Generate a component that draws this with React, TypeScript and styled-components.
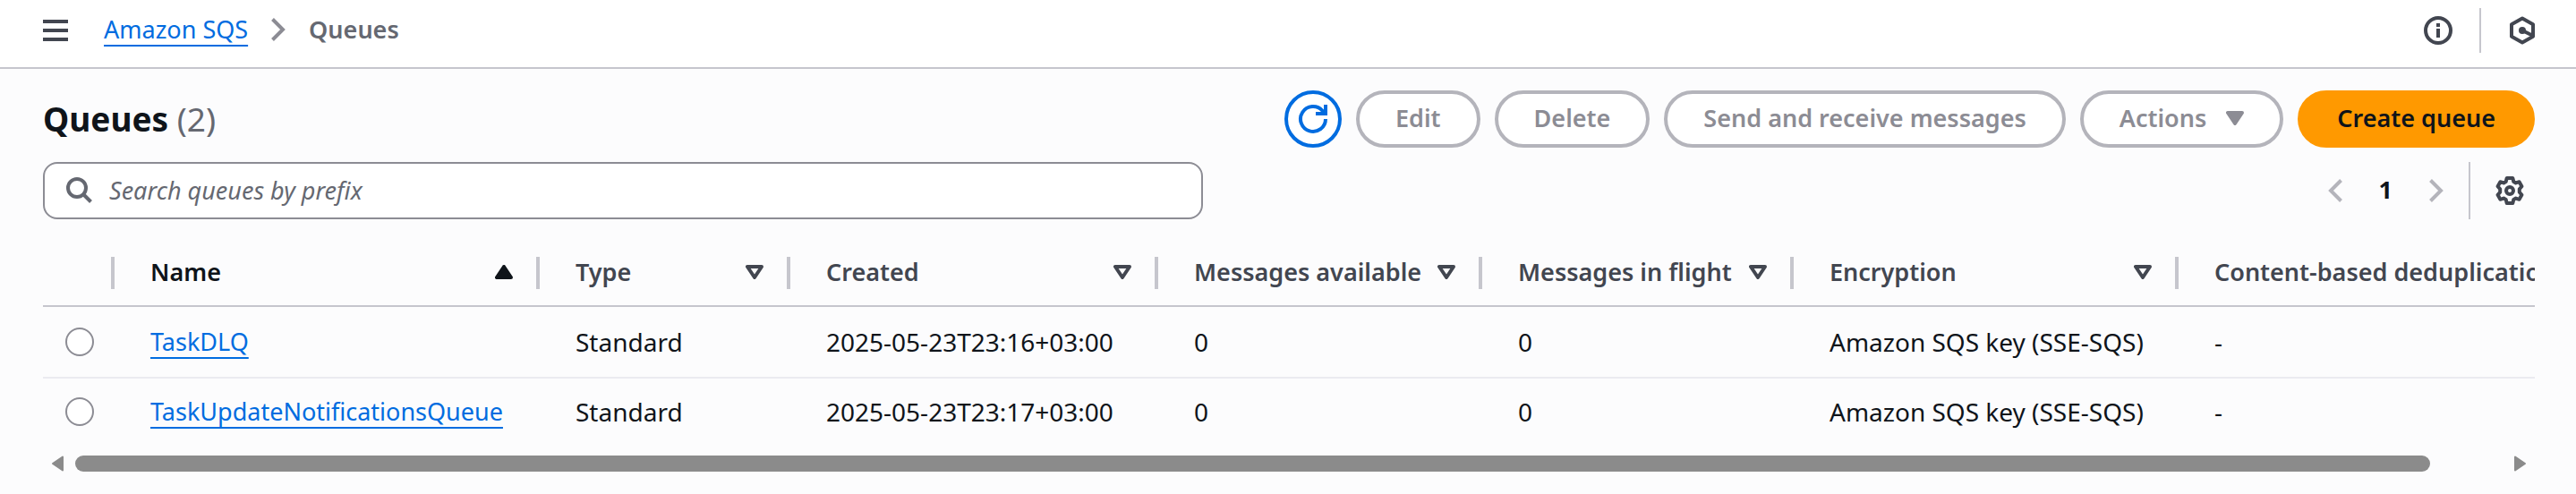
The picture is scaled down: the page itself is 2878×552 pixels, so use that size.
import React from 'react';
import styled, { createGlobalStyle } from 'styled-components';

const color = {
  text: '#0f141a',
  heading: '#424650',
  muted: '#656871',
  link: '#006ce0',
  line: '#c6c6cd',
  rowLine: '#ebebf0',
  disabledBorder: '#b4b4bb',
  disabledText: '#8c8c94',
  accent: '#ff9900',
  page: '#fcfcfd',
  surface: '#ffffff',
};

const GlobalStyle = createGlobalStyle`
  *, *::before, *::after { box-sizing: border-box; }
  body {
    margin: 0;
    background: ${color.page};
    color: ${color.text};
    font-family: "Noto Sans", "Open Sans", sans-serif;
    font-size: 27px;
    line-height: 36px;
  }
  button, input { font: inherit; color: inherit; }
`;

const TopBar = styled.header`
  display: flex;
  align-items: center;
  justify-content: space-between;
  height: 77px;
  padding: 0 44px 7px 48px;
  background: ${color.surface};
  border-bottom: 2px solid ${color.line};
`;

const TopBarGroup = styled.div<{ $gap: number }>`
  display: flex;
  align-items: center;
  gap: ${(p) => p.$gap}px;
`;

const IconButton = styled.button<{ $tone?: string }>`
  display: flex;
  align-items: center;
  justify-content: center;
  padding: 0;
  border: 0;
  background: none;
  color: ${(p) => p.$tone ?? color.heading};
  cursor: pointer;
`;

const Crumbs = styled.ol`
  display: flex;
  align-items: center;
  gap: 26px;
  margin: 0;
  padding: 0 0 2px;
  list-style: none;

  svg { display: block; color: ${color.disabledText}; }
`;

const CurrentCrumb = styled.span`
  color: ${color.muted};
  font-weight: 600;
`;

const Link = styled.a`
  color: ${color.link};
  text-decoration: underline;
  text-decoration-thickness: 2px;
  text-decoration-skip-ink: none;
  text-underline-offset: 7px;
`;

const Divider = styled.span<{ $height: number }>`
  width: 2px;
  height: ${(p) => p.$height}px;
  background: ${color.line};
`;

const Main = styled.main`
  padding: 24px 46px 24px 48px;
`;

const TitleRow = styled.div`
  display: flex;
  align-items: center;
  justify-content: space-between;
  margin-bottom: 16px;
`;

const Title = styled.h1`
  margin: 0;
  font-size: 37px;
  line-height: 48px;
  font-weight: 700;
`;

const Count = styled.span`
  color: ${color.muted};
  font-weight: 400;
`;

const ButtonGroup = styled.div`
  display: flex;
  gap: 16px;
`;

const Button = styled.button<{ $primary?: boolean }>`
  display: flex;
  align-items: center;
  gap: 22px;
  height: 64px;
  padding: 0 40px 2px;
  border: 4px solid ${(p) => (p.$primary ? color.accent : color.disabledBorder)};
  border-radius: 32px;
  background: ${(p) => (p.$primary ? color.accent : color.surface)};
  color: ${(p) => (p.$primary ? color.text : color.disabledText)};
  font-weight: 600;
  white-space: nowrap;
`;

const RefreshButton = styled(IconButton)`
  width: 64px;
  height: 64px;
  border: 4px solid ${color.link};
  border-radius: 50%;
  background: ${color.surface};
  color: ${color.link};
`;

const ToolsRow = styled.div`
  display: flex;
  align-items: center;
  justify-content: space-between;
`;

const SearchBox = styled.label`
  display: flex;
  align-items: center;
  gap: 18px;
  flex: 0 1 1296px;
  height: 64px;
  padding: 0 24px;
  border: 2px solid ${color.disabledText};
  border-radius: 16px;
  background: ${color.surface};
  color: ${color.muted};
`;

const SearchInput = styled.input`
  flex: 1;
  min-width: 0;
  height: 56px;
  padding: 0 0 2px;
  border: 0;
  outline: 0;
  background: none;

  &::placeholder {
    color: ${color.muted};
    font-style: italic;
    opacity: 1;
  }
`;

const Pager = styled.nav`
  display: flex;
  align-items: center;
  padding-right: 12px;
`;

const PagerItems = styled.div`
  display: flex;
  align-items: center;
  gap: 41px;
  margin-right: 28px;
`;

const PageNumber = styled.button`
  padding: 0 0 2px;
  border: 0;
  background: none;
  font-weight: 700;
`;

const SettingsSlot = styled.div`
  display: flex;
  align-items: center;
  gap: 28px;
`;

const TableScroller = styled.div`
  margin-top: 24px;
  overflow-x: auto;
  scrollbar-width: none;
`;

const Table = styled.table`
  width: 2870px;
  border-collapse: separate;
  border-spacing: 0;
  table-layout: fixed;
`;

const Column = styled.col<{ $width?: number }>`
  width: ${(p) => (p.$width ? `${p.$width}px` : 'auto')};
`;

const HeaderCell = styled.th<{ $sorted?: boolean }>`
  padding: 18px 0;
  border-bottom: 2px solid ${color.line};
  color: ${(p) => (p.$sorted ? color.text : color.heading)};
  font-weight: 600;
  text-align: left;
`;

const HeaderContent = styled.div`
  display: flex;
  align-items: center;
  justify-content: space-between;
  height: 36px;
  padding: 0 26px 2px 40px;
  border-right: 4px solid ${color.line};
  white-space: nowrap;
`;

const Cell = styled.td<{ $link?: boolean }>`
  padding: 0 0 0 40px;
  font-size: ${(p) => (p.$link ? 27 : 28)}px;
  white-space: nowrap;
`;

const SelectCell = styled(Cell)`
  padding-left: 25px;
`;

const BodyRow = styled.tr`
  height: 74px;

  &:not(:last-child) { height: 80px; }
  &:not(:last-child) > td { border-bottom: 2px solid ${color.rowLine}; }
`;

const Radio = styled.input`
  display: block;
  appearance: none;
  width: 32px;
  height: 32px;
  margin: 0;
  border: 2px solid ${color.disabledText};
  border-radius: 50%;
  background: ${color.surface};

  &:checked { border: 10px solid ${color.link}; }
`;

const ScrollBar = styled.div`
  display: flex;
  align-items: center;
  gap: 13px;
  margin-top: 12px;
  padding: 0 9px;
  color: #8b8b8b;
`;

const ScrollTrack = styled.div`
  flex: 1;
`;

const ScrollThumb = styled.div`
  width: 97%;
  height: 18px;
  border-radius: 9px;
  background: currentColor;
`;

type IconProps = { w: number; h: number; children: React.ReactNode };
const Icon = ({ w, h, children }: IconProps) => (
  <svg
    width={w}
    height={h}
    viewBox={`0 0 ${w} ${h}`}
    fill="none"
    stroke="currentColor"
    strokeWidth="4"
    aria-hidden="true"
  >
    {children}
  </svg>
);

const MenuIcon = () => (
  <Icon w={28} h={24}>
    <path d="M0 2H28M0 12H28M0 22H28" />
  </Icon>
);
const ChevronRight = () => (
  <Icon w={16} h={26}>
    <path d="M1.500 1.500 L13 13 L1.500 24.500" />
  </Icon>
);
const ChevronLeft = () => (
  <Icon w={16} h={26}>
    <path d="M14.500 1.500 L3 13 L14.500 24.500" />
  </Icon>
);
const InfoIcon = () => (
  <Icon w={32} h={32}>
    <circle cx="16" cy="16" r="14" />
    <path d="M16 8V12M16 14V24" />
  </Icon>
);
const HexagonIcon = () => (
  <Icon w={32} h={32}>
    <path d="M16 2.500 L28 9.200 V22.800 L16 29.500 L4 22.800 V9.200 Z" strokeLinejoin="round" />
    <circle cx="16" cy="16" r="4" fill="currentColor" stroke="none" />
    <path d="M16 16 L28 22" />
  </Icon>
);
const RefreshIcon = () => (
  <Icon w={34} h={34}>
    <path d="M31 17 A14 14 0 1 1 27.500 7.700 L30 11" />
    <path d="M31 1V11H20" />
  </Icon>
);
const SearchIcon = () => (
  <Icon w={30} h={30}>
    <circle cx="12" cy="12" r="10" />
    <path d="M19 19 L27.500 27.500" />
  </Icon>
);
const GearIcon = () => (
  <Icon w={32} h={32}>
    <path
      strokeLinejoin="round"
      d="M12.700 2 H19.300 L20.300 6 L22.800 7.400 L26.600 6.200 L29.400 11.200 L26.800 14.300 V17.700 L29.400 20.800 L26.600 25.800 L22.800 24.600 L20.300 26 L19.300 30 H12.700 L11.700 26 L9.200 24.600 L5.400 25.800 L2.600 20.800 L5.200 17.700 V14.300 L2.600 11.200 L5.400 6.200 L9.200 7.400 L11.700 6 Z"
    />
    <circle cx="16" cy="16" r="4" />
  </Icon>
);
const SortIcon = () => (
  <Icon w={20} h={16}>
    <path d="M2 2H18L10 14Z" strokeLinejoin="round" />
  </Icon>
);
const SortedIcon = () => (
  <Icon w={20} h={16}>
    <path d="M2 14H18L10 2Z" strokeLinejoin="round" fill="currentColor" />
  </Icon>
);
const CaretIcon = () => (
  <Icon w={20} h={16}>
    <path d="M2 2H18L10 14Z" strokeLinejoin="round" fill="currentColor" />
  </Icon>
);
const ArrowLeft = () => (
  <Icon w={14} h={18}>
    <path d="M13 1.500V16.500L2 9Z" strokeWidth="2" strokeLinejoin="round" fill="currentColor" />
  </Icon>
);
const ArrowRight = () => (
  <Icon w={14} h={18}>
    <path d="M1 1.500V16.500L12 9Z" strokeWidth="2" strokeLinejoin="round" fill="currentColor" />
  </Icon>
);

const columns = [
  { label: 'Name', width: 475, sorted: true },
  { label: 'Type', width: 280 },
  { label: 'Created', width: 411 },
  { label: 'Messages available', width: 362 },
  { label: 'Messages in flight', width: 348 },
  { label: 'Encryption', width: 430 },
  { label: 'Content-based deduplication', width: undefined },
];

const queues = [
  { name: 'TaskDLQ', created: '2025-05-23T23:16+03:00' },
  { name: 'TaskUpdateNotificationsQueue', created: '2025-05-23T23:17+03:00' },
];

export default function App() {
  return (
    <>
      <GlobalStyle />
      <TopBar>
        <TopBarGroup $gap={40}>
          <IconButton aria-label="Open navigation">
            <MenuIcon />
          </IconButton>
          <nav aria-label="Breadcrumbs">
            <Crumbs>
              <li>
                <Link href="#sqs">Amazon SQS</Link>
              </li>
              <li>
                <ChevronRight />
              </li>
              <li>
                <CurrentCrumb>Queues</CurrentCrumb>
              </li>
            </Crumbs>
          </nav>
        </TopBarGroup>
        <TopBarGroup $gap={30}>
          <IconButton aria-label="Info">
            <InfoIcon />
          </IconButton>
          <Divider $height={50} />
          <IconButton aria-label="Assistant">
            <HexagonIcon />
          </IconButton>
        </TopBarGroup>
      </TopBar>

      <Main>
        <TitleRow>
          <Title>
            Queues <Count>(2)</Count>
          </Title>
          <ButtonGroup>
            <RefreshButton aria-label="Refresh">
              <RefreshIcon />
            </RefreshButton>
            <Button disabled>Edit</Button>
            <Button disabled>Delete</Button>
            <Button disabled>Send and receive messages</Button>
            <Button disabled>
              Actions
              <CaretIcon />
            </Button>
            <Button $primary>Create queue</Button>
          </ButtonGroup>
        </TitleRow>

        <ToolsRow>
          <SearchBox>
            <SearchIcon />
            <SearchInput type="text" aria-label="Search queues" placeholder="Search queues by prefix" />
          </SearchBox>
          <Pager aria-label="Pagination">
            <PagerItems>
              <IconButton $tone={color.disabledBorder} aria-label="Previous page" disabled>
                <ChevronLeft />
              </IconButton>
              <PageNumber aria-current="page">1</PageNumber>
              <IconButton $tone={color.disabledBorder} aria-label="Next page" disabled>
                <ChevronRight />
              </IconButton>
            </PagerItems>
            <SettingsSlot>
              <Divider $height={64} />
              <IconButton aria-label="Preferences">
                <GearIcon />
              </IconButton>
            </SettingsSlot>
          </Pager>
        </ToolsRow>

        <TableScroller>
          <Table>
            <colgroup>
              <Column $width={80} />
              {columns.map((c) => (
                <Column key={c.label} $width={c.width} />
              ))}
            </colgroup>
            <thead>
              <tr>
                <HeaderCell aria-label="Selection">
                  <HeaderContent />
                </HeaderCell>
                {columns.map((c) => (
                  <HeaderCell key={c.label} $sorted={c.sorted} aria-sort={c.sorted ? 'ascending' : undefined}>
                    <HeaderContent>
                      {c.label}
                      {c.sorted ? <SortedIcon /> : <SortIcon />}
                    </HeaderContent>
                  </HeaderCell>
                ))}
              </tr>
            </thead>
            <tbody>
              {queues.map((q) => (
                <BodyRow key={q.name}>
                  <SelectCell>
                    <Radio type="radio" name="queue" aria-label={`Select ${q.name}`} />
                  </SelectCell>
                  <Cell $link>
                    <Link href={`#${q.name}`}>{q.name}</Link>
                  </Cell>
                  <Cell>Standard</Cell>
                  <Cell>{q.created}</Cell>
                  <Cell>0</Cell>
                  <Cell>0</Cell>
                  <Cell>Amazon SQS key (SSE-SQS)</Cell>
                  <Cell>-</Cell>
                </BodyRow>
              ))}
            </tbody>
          </Table>
        </TableScroller>

        <ScrollBar aria-hidden="true">
          <ArrowLeft />
          <ScrollTrack>
            <ScrollThumb />
          </ScrollTrack>
          <ArrowRight />
        </ScrollBar>
      </Main>
    </>
  );
}
